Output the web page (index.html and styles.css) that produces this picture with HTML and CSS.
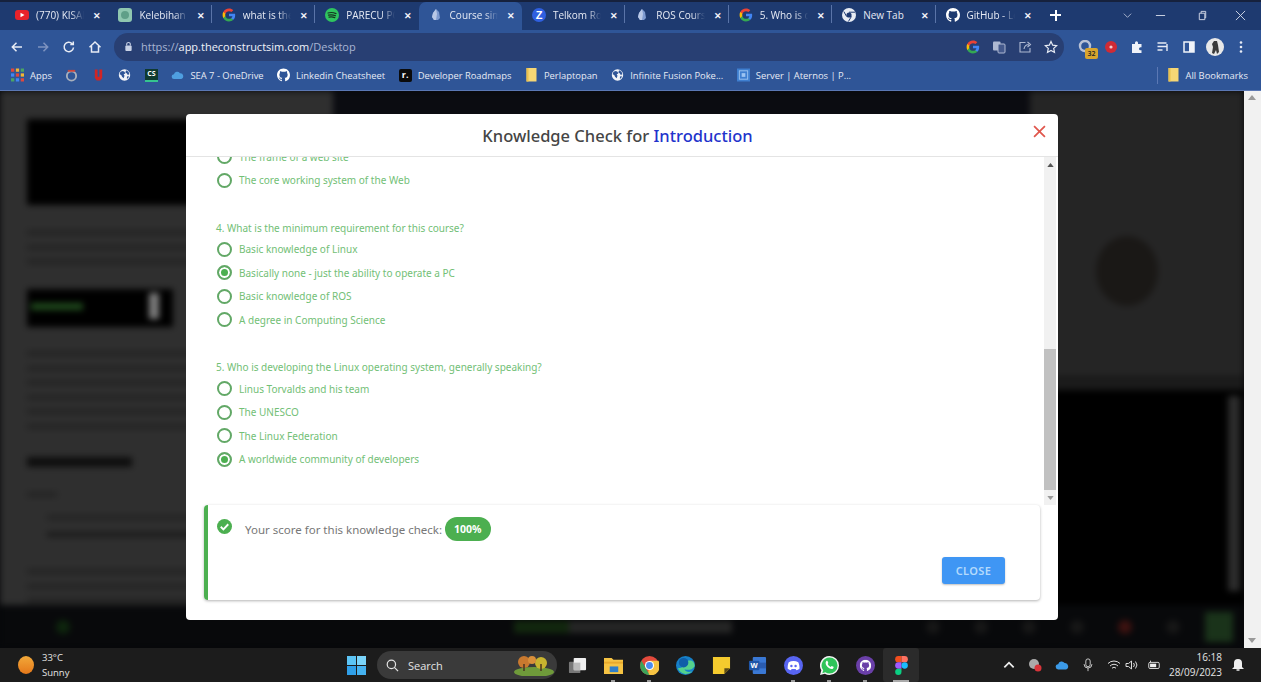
FILE: index.html
```html
<!DOCTYPE html>
<html lang="en">
<head>
    <meta charset="UTF-8">
    <meta name="viewport" content="width=device-width, initial-scale=1.0">
    <title>Course simulation - Knowledge Check</title>
    <link rel="stylesheet" href="styles.css">
</head>
<body>
    <svg class="defs" width="0" height="0">
        <symbol id="i-g" viewBox="0 0 24 24">
            <path fill="#4285F4" d="M22.56 12.25c0-.78-.07-1.53-.2-2.25H12v4.26h5.92c-.26 1.37-1.04 2.53-2.21 3.31v2.77h3.57c2.08-1.92 3.28-4.74 3.28-8.09z"/>
            <path fill="#34A853" d="M12 23c2.97 0 5.46-.98 7.28-2.66l-3.57-2.77c-.98.66-2.23 1.06-3.71 1.06-2.86 0-5.29-1.93-6.16-4.53H2.18v2.84C3.99 20.53 7.7 23 12 23z"/>
            <path fill="#FBBC05" d="M5.84 14.09c-.22-.66-.35-1.36-.35-2.09s.13-1.43.35-2.09V7.07H2.18C1.43 8.55 1 10.22 1 12s.43 3.45 1.18 4.93l2.85-2.22.81-.62z"/>
            <path fill="#EA4335" d="M12 5.38c1.62 0 3.06.56 4.21 1.64l3.15-3.15C17.45 2.09 14.97 1 12 1 7.7 1 3.99 3.47 2.18 7.07l3.66 2.84c.87-2.6 3.3-4.53 6.16-4.53z"/>
        </symbol>
        <symbol id="i-gh" viewBox="0 0 16 16">
            <path fill="currentColor" d="M8 0C3.58 0 0 3.58 0 8c0 3.54 2.29 6.53 5.47 7.59.4.07.55-.17.55-.38 0-.19-.01-.82-.01-1.49-2.01.37-2.53-.49-2.69-.94-.09-.23-.48-.94-.82-1.13-.28-.15-.68-.52-.01-.53.63-.01 1.08.58 1.23.82.72 1.21 1.87.87 2.33.66.07-.52.28-.87.51-1.07-1.78-.2-3.64-.89-3.64-3.95 0-.87.31-1.59.82-2.15-.08-.2-.36-1.02.08-2.12 0 0 .67-.21 2.2.82.64-.18 1.32-.27 2-.27s1.36.09 2 .27c1.53-1.04 2.2-.82 2.2-.82.44 1.1.16 1.92.08 2.12.51.56.82 1.27.82 2.15 0 3.07-1.87 3.75-3.65 3.95.29.25.54.73.54 1.48 0 1.07-.01 1.93-.01 2.2 0 .21.15.46.55.38A8.013 8.013 0 0016 8c0-4.42-3.58-8-8-8z"/>
        </symbol>
        <symbol id="i-globe" viewBox="0 0 16 16">
            <circle cx="8" cy="8" r="7" fill="#f2f4f8"/>
            <path fill="#2f5597" d="M3 4l3-1 2 1 1 2-2 1 1 2-1 3-2-2-1-2-2-1zM10 2l3 2 1 3-2 1-1-2-2-1zM11 10l2-1 0 2-2 2z"/>
        </symbol>
        <symbol id="i-folder" viewBox="0 0 12 14">
            <path fill="#f6d775" d="M1 0h10v13.5H1z"/>
            <path fill="#e9c04e" d="M1 0h2v13.5H1z"/>
        </symbol>
        <symbol id="i-course" viewBox="0 0 14 14">
            <path fill="#7f9bd0" d="M7 1l3 3 1 6-2 2H5L3 9l1-4z"/>
            <path fill="#b9c8e6" d="M7 1l1 5-1 6H5L3 9l1-4z"/>
        </symbol>
    </svg>

    <header class="browser">
        <div class="tabstrip">
            <div class="tab">
                <svg class="tab-icon" viewBox="0 0 14 14"><rect y="2" width="14" height="10" rx="3" fill="#e8222a"/><path fill="#fff" d="M5.5 4.8L9.5 7l-4 2.2z"/></svg>
                <span class="tab-title">(770) KISAH</span><span class="tab-close">✕</span>
            </div>
            <div class="tab">
                <svg class="tab-icon" viewBox="0 0 14 14"><rect width="14" height="14" rx="3" fill="#8fc7b0"/><circle cx="7" cy="7" r="4" fill="#5f9f88"/></svg>
                <span class="tab-title">Kelebihan d</span><span class="tab-close">✕</span>
            </div>
            <div class="tab sep">
                <svg class="tab-icon"><use href="#i-g"/></svg>
                <span class="tab-title">what is the</span><span class="tab-close">✕</span>
            </div>
            <div class="tab sep">
                <svg class="tab-icon" viewBox="0 0 14 14"><circle cx="7" cy="7" r="7" fill="#2fc55f"/><path d="M3 5q4-1.200 8 .6M3.500 7.200q3.500-.9 7 .5M4 9.200q3-.7 5.800.4" fill="none" stroke="#16331f" stroke-width="1.200" stroke-linecap="round"/></svg>
                <span class="tab-title">PARECU PO</span><span class="tab-close">✕</span>
            </div>
            <div class="tab active">
                <svg class="tab-icon"><use href="#i-course"/></svg>
                <span class="tab-title">Course sim</span><span class="tab-close">✕</span>
            </div>
            <div class="tab">
                <svg class="tab-icon" viewBox="0 0 14 14"><circle cx="7" cy="7" r="7" fill="#2f5fe0"/><text x="7" y="10.800" text-anchor="middle" class="tab-z">Z</text></svg>
                <span class="tab-title">Telkom Rob</span><span class="tab-close">✕</span>
            </div>
            <div class="tab sep">
                <svg class="tab-icon"><use href="#i-course"/></svg>
                <span class="tab-title">ROS Course</span><span class="tab-close">✕</span>
            </div>
            <div class="tab sep">
                <svg class="tab-icon"><use href="#i-g"/></svg>
                <span class="tab-title">5. Who is d</span><span class="tab-close">✕</span>
            </div>
            <div class="tab sep">
                <svg class="tab-icon" viewBox="0 0 14 14"><circle cx="7" cy="7" r="7" fill="#e8ecf4"/><circle cx="7" cy="7" r="2.600" fill="#1f3a72"/><path d="M7 4.200h6M4.600 8.500L1.800 3.500M9.400 8.500L6.400 13.500" stroke="#1f3a72" stroke-width="1"/></svg>
                <span class="tab-title solid">New Tab</span><span class="tab-close">✕</span>
            </div>
            <div class="tab sep">
                <svg class="tab-icon"><use href="#i-gh"/></svg>
                <span class="tab-title">GitHub - Le</span><span class="tab-close">✕</span>
            </div>
            <div class="tab-new"><span></span></div>
            <div class="win-controls">
                <svg viewBox="0 0 12 12" class="win-btn chevron"><path d="M2 4l4 4 4-4" fill="none" stroke="#aeb9d2" stroke-width="1"/></svg>
                <svg viewBox="0 0 12 12" class="win-btn minimize"><path d="M1 6h10" stroke="#d7dcea" stroke-width="1"/></svg>
                <svg viewBox="0 0 12 12" class="win-btn restore"><path d="M2.500 3.500h6v7h-6zM4.500 3.500v-2h5v7h-1" fill="none" stroke="#d7dcea" stroke-width="1"/></svg>
                <svg viewBox="0 0 12 12" class="win-btn closer"><path d="M1 1l10 10M11 1L1 11" stroke="#d7dcea" stroke-width="1"/></svg>
            </div>
        </div>

        <div class="toolbar">
            <span class="tool"><svg viewBox="0 0 14 14"><path d="M12 7H2.500M6.500 2.800L2.300 7l4.200 4.200" fill="none" stroke="#e8ecf5" stroke-width="1.500"/></svg></span>
            <span class="tool"><svg viewBox="0 0 14 14"><path d="M2 7h9.500M7.500 2.800L11.700 7l-4.200 4.200" fill="none" stroke="#7e93c0" stroke-width="1.500"/></svg></span>
            <span class="tool"><svg viewBox="0 0 14 14"><path d="M11.500 7.500a4.700 4.700 0 1 1-1.300-3.800M11.300 1.500v3h-3" fill="none" stroke="#e8ecf5" stroke-width="1.500"/></svg></span>
            <span class="tool"><svg viewBox="0 0 14 14"><path d="M1.500 7.200L7 2l5.500 5.200M3.500 6v6h7V6" fill="none" stroke="#e8ecf5" stroke-width="1.500"/></svg></span>
            <div class="address">
                <svg class="lock" viewBox="0 0 10 12"><path d="M3 5V3.500a2 2 0 0 1 4 0V5" fill="none" stroke="#c9d2e6" stroke-width="1.200"/><rect x="1.500" y="5" width="7" height="6" rx="1" fill="#c9d2e6"/></svg>
                <span class="url"><span class="url-dim">https://</span>app.theconstructsim.com<span class="url-dim">/Desktop</span></span>
                <span class="tool addr-tool"><svg><use href="#i-g"/></svg></span>
                <span class="tool addr-tool"><svg viewBox="0 0 14 14"><rect x="1" y="1.500" width="7.500" height="9" rx="1" fill="#aeb9d2"/><rect x="6" y="4" width="7" height="9" rx="1" fill="#44598c" stroke="#aeb9d2"/></svg></span>
                <span class="tool addr-tool"><svg viewBox="0 0 14 14"><path d="M7.500 2.500H2v9.500h10V8M6 9c.5-3 2.500-4.500 5-4.500M9.500 2L12.500 4.500 9.500 7" fill="none" stroke="#aeb9d2" stroke-width="1.100"/></svg></span>
                <span class="tool addr-tool"><svg viewBox="0 0 14 14"><path d="M7 1.500l1.700 3.700 4 .5-3 2.700.8 4L7 10.400l-3.500 2 .8-4-3-2.700 4-.5z" fill="none" stroke="#e8ecf5" stroke-width="1.200"/></svg></span>
            </div>
            <div class="ext-tools">
                <span class="tool badge-wrap"><svg viewBox="0 0 14 14"><circle cx="7" cy="6" r="5" fill="none" stroke="#b9c2d6" stroke-width="2.400"/></svg><span class="count">32</span></span>
                <span class="tool"><svg viewBox="0 0 14 14"><circle cx="7" cy="7" r="6" fill="#cf2b35"/><circle cx="7" cy="7" r="1.600" fill="#f6c8cb"/></svg></span>
                <span class="tool"><svg viewBox="0 0 14 14"><path fill="#f0f3f9" d="M2 4h3V2.800a1.500 1.500 0 0 1 3 0V4h3.500v3.200h-1a1.500 1.500 0 0 0 0 3h1V13H2z"/></svg></span>
                <span class="tool"><svg viewBox="0 0 14 14"><path d="M1.500 3h9M1.500 6.500h9M1.500 10h5M11 4v7" fill="none" stroke="#e8ecf5" stroke-width="1.400"/></svg></span>
                <span class="tool"><svg viewBox="0 0 14 14"><rect x="2" y="2" width="10" height="10" fill="none" stroke="#f0f3f9" stroke-width="1.500"/><rect x="7" y="2" width="5" height="10" fill="#f0f3f9"/></svg></span>
                <span class="tool"><svg class="avatar" viewBox="0 0 18 18"><circle cx="9" cy="9" r="9" fill="#e8e8e8"/><path fill="#3a3a3a" d="M8 3h3l1 4 1 7-2 2-1-4-2 4-2-1 1-6-1-3z"/></svg></span>
                <span class="tool"><svg viewBox="0 0 14 14"><circle cx="7" cy="2.500" r="1.300" fill="#e8ecf5"/><circle cx="7" cy="7" r="1.300" fill="#e8ecf5"/><circle cx="7" cy="11.500" r="1.300" fill="#e8ecf5"/></svg></span>
            </div>
        </div>

        <nav class="bookmarks">
            <a class="mark"><svg class="apps" viewBox="0 0 12 12"><path fill="#e0483c" d="M0 0h3v3H0z"/><path fill="#f2b632" d="M4.500 0h3v3h-3z"/><path fill="#4aa564" d="M9 0h3v3H9z"/><path fill="#4285f4" d="M0 4.500h3v3H0z"/><path fill="#e0483c" d="M4.500 4.500h3v3h-3z"/><path fill="#f2b632" d="M9 4.500h3v3H9z"/><path fill="#4aa564" d="M0 9h3v3H0z"/><path fill="#4285f4" d="M4.500 9h3v3h-3z"/><path fill="#e0483c" d="M9 9h3v3H9z"/></svg>Apps</a>
            <a class="mark"><svg viewBox="0 0 14 14"><circle cx="7" cy="8" r="5" fill="none" stroke="#a8b0bd" stroke-width="2"/><path d="M3 2.500h8" stroke="#c9443c" stroke-width="2"/></svg></a>
            <a class="mark"><svg viewBox="0 0 14 14"><path d="M3 1h3v8h2V1h3v9l-2 3H5l-2-3z" fill="#d02525"/></svg></a>
            <a class="mark"><svg><use href="#i-globe"/></svg></a>
            <a class="mark"><span class="cs">CS</span></a>
            <a class="mark"><svg viewBox="0 0 16 12" class="cloud"><path fill="#4f9fe0" d="M4 11a3 3 0 0 1-.4-6A4.200 4.200 0 0 1 11 3.800 3.700 3.700 0 0 1 12.500 11z"/></svg>SEA 7 - OneDrive</a>
            <a class="mark"><svg class="gh"><use href="#i-gh"/></svg>Linkedin Cheatsheet</a>
            <a class="mark"><span class="rm">r.</span>Developer Roadmaps</a>
            <a class="mark"><svg><use href="#i-folder"/></svg>Perlaptopan</a>
            <a class="mark"><svg><use href="#i-globe"/></svg>Infinite Fusion Poke...</a>
            <a class="mark"><svg viewBox="0 0 14 14"><rect width="14" height="14" fill="#3f7fd0"/><rect x="2.500" y="2.500" width="9" height="9" fill="none" stroke="#9cc4f2"/><rect x="5" y="5" width="4" height="4" fill="#9cc4f2"/></svg>Server | Aternos | P...</a>
            <a class="mark all"><svg><use href="#i-folder"/></svg>All Bookmarks</a>
        </nav>
    </header>

    <main class="stage">
        <div class="page">
            <div class="page-blur">
                <div class="page-main">
                    <section class="lesson">
                        <div class="video"></div>
                        <div class="para">
                            <i></i><i></i><i class="short"></i>
                        </div>
                        <div class="code"><b></b><u></u></div>
                        <div class="para wide">
                            <i></i><i></i><i></i><i></i><i></i><i></i>
                        </div>
                        <div class="lesson-head"></div>
                        <div class="para list">
                            <i class="tiny"></i><i class="indent"></i><i class="indent dark"></i>
                        </div>
                        <div class="para last">
                            <i></i><i></i><i></i>
                        </div>
                    </section>
                    <div class="middle"></div>
                    <aside class="side">
                        <div class="side-top"><div class="robot"></div></div>
                        <div class="side-strip"></div>
                        <div class="side-bottom"><div class="side-scroll"></div></div>
                    </aside>
                </div>
                <div class="page-bar">
                    <span class="dot green"></span>
                    <span class="bar-progress"></span>
                    <span class="dot"></span><span class="dot"></span><span class="dot"></span><span class="dot"></span>
                    <span class="dot red"></span><span class="dot"></span>
                    <span class="run"></span>
                </div>
            </div>
        </div>
        <div class="page-scroll">
            <svg viewBox="0 0 8 5"><path d="M4 0l4 5H0z"/></svg>
            <svg viewBox="0 0 8 5"><path d="M0 0h8L4 5z"/></svg>
        </div>

        <div class="modal">
            <div class="modal-head">
                <h2>Knowledge Check for <span>Introduction</span></h2>
                <svg class="modal-x" viewBox="0 0 12 12"><path d="M1 1l10 10M11 1L1 11" stroke="#e0564c" stroke-width="1.600"/></svg>
            </div>
            <div class="modal-body">
                <div class="quiz">
                    <label class="opt first"><span class="radio"></span>The frame of a web site</label>
                    <label class="opt"><span class="radio"></span>The core working system of the Web</label>

                    <p class="question">4. What is the minimum requirement for this course?</p>
                    <label class="opt"><span class="radio"></span>Basic knowledge of Linux</label>
                    <label class="opt"><span class="radio on"></span>Basically none - just the ability to operate a PC</label>
                    <label class="opt"><span class="radio"></span>Basic knowledge of ROS</label>
                    <label class="opt"><span class="radio"></span>A degree in Computing Science</label>

                    <p class="question">5. Who is developing the Linux operating system, generally speaking?</p>
                    <label class="opt"><span class="radio"></span>Linus Torvalds and his team</label>
                    <label class="opt"><span class="radio"></span>The UNESCO</label>
                    <label class="opt"><span class="radio"></span>The Linux Federation</label>
                    <label class="opt"><span class="radio on"></span>A worldwide community of developers</label>
                </div>
                <div class="quiz-scroll">
                    <svg viewBox="0 0 8 5"><path d="M4 0l4 5H0z"/></svg>
                    <div class="quiz-thumb"></div>
                    <svg viewBox="0 0 8 5"><path d="M0 0h8L4 5z"/></svg>
                </div>
            </div>
            <div class="result">
                <div class="score">
                    <svg class="check" viewBox="0 0 16 16"><circle cx="8" cy="8" r="8" fill="#4caf50"/><path d="M4 8.300l2.800 2.700L12 5.600" fill="none" stroke="#fff" stroke-width="2"/></svg>
                    <span class="score-text">Your score for this knowledge check:</span>
                    <span class="pill">100%</span>
                </div>
                <div class="actions"><button class="close-btn">CLOSE</button></div>
            </div>
        </div>
    </main>

    <footer class="taskbar">
        <div class="weather">
            <span class="sun"></span>
            <div class="weather-text"><span>33°C</span><span>Sunny</span></div>
        </div>
        <span class="task"><svg viewBox="0 0 20 20"><path fill="#5cc4f5" d="M0 0h9.500v9.500H0z"/><path fill="#7ad4fa" d="M10.500 0H20v9.500h-9.500z"/><path fill="#2f9fe8" d="M0 10.500h9.500V20H0z"/><path fill="#45b2f0" d="M10.500 10.500H20V20h-9.500z"/></svg></span>
        <div class="search">
            <svg viewBox="0 0 14 14"><circle cx="5.800" cy="5.800" r="4.500" fill="none" stroke="#e4e4e4" stroke-width="1.300"/><path d="M9 9l4 4" stroke="#e4e4e4" stroke-width="1.300"/></svg>
            <span>Search</span>
            <svg class="search-art" viewBox="0 0 44 22"><ellipse cx="24" cy="18" rx="20" ry="5" fill="#6f9a3a"/><circle cx="14" cy="8" r="6" fill="#c9792f"/><circle cx="31" cy="9" r="6" fill="#c8b42f"/><circle cx="22" cy="6" r="4" fill="#d98f3a"/><path d="M14 10v7M31 10v7" stroke="#4a3520" stroke-width="1.500"/></svg>
        </div>
        <span class="task"><svg viewBox="0 0 20 20"><rect x="1" y="6" width="12" height="12" rx="1" fill="#777"/><rect x="6" y="2" width="13" height="13" rx="1" fill="#f0f0f0"/><rect x="6" y="7" width="7" height="8" fill="#bbb"/></svg></span>
        <span class="task running"><svg viewBox="0 0 20 20"><path fill="#f6c343" d="M0 2h8l2 2h10v15H0z"/><path fill="#e8a92c" d="M0 6h20v2H0z"/><rect x="6" y="11" width="9" height="6" fill="#2f7fc9"/></svg></span>
        <span class="task running"><svg viewBox="0 0 20 20"><circle cx="10" cy="10" r="10" fill="#e34a3c"/><path fill="#f6c343" d="M10 5h9.500a10 10 0 0 1-11 15z"/><path fill="#3ba45a" d="M10 20A10 10 0 0 1 1.500 5l5 8.500z"/><circle cx="10" cy="10" r="4.800" fill="#fff"/><circle cx="10" cy="10" r="3.600" fill="#4a8bf0"/></svg></span>
        <span class="task"><svg viewBox="0 0 20 20"><circle cx="10" cy="10" r="10" fill="#1680c8"/><path fill="#54d18c" d="M2 13a9 9 0 0 0 15 3c-3 1.500-7 1-8-2 3 1 8 1 10.500-3 .4-2-.5-4-1.500-5-1.500-1.500-6-2-8 1-1.500 2-1 5-8 6z"/><circle cx="8" cy="7" r="5" fill="#0f5ea8"/></svg></span>
        <span class="task"><svg viewBox="0 0 20 20"><path fill="#f5cb2e" d="M1 1h18v12l-6 6H1z"/><path fill="#5a4a18" d="M13 13h6l-6 6z"/></svg></span>
        <span class="task"><svg viewBox="0 0 20 20"><rect x="5" y="1" width="14" height="18" rx="1" fill="#3a78d4"/><rect x="5" y="7" width="14" height="6" fill="#2a5cb0"/><rect x="1" y="5" width="11" height="10" rx="1" fill="#1f56a8"/><text x="6.500" y="13" text-anchor="middle" class="word-w">W</text></svg></span>
        <span class="task running"><svg viewBox="0 0 20 20"><circle cx="10" cy="10" r="10" fill="#5865f2"/><path fill="#fff" d="M5 6.500c3-1.500 7-1.500 10 0 1 2 1.500 4.500 1.300 7-1.200.9-2.300 1.300-3.300 1.500l-.8-1.300H8l-.8 1.300c-1-.2-2.100-.6-3.300-1.500-.2-2.500.2-5 1.100-7z"/><circle cx="7.800" cy="10.500" r="1.300" fill="#5865f2"/><circle cx="12.200" cy="10.500" r="1.300" fill="#5865f2"/></svg></span>
        <span class="task running"><svg viewBox="0 0 20 20"><path fill="#f4f4f4" d="M10 0a10 10 0 0 1 0 20c-1.800 0-3.400-.5-4.900-1.300L0 20l1.400-4.900A10 10 0 0 1 10 0z"/><path fill="#2fc45a" d="M10 1.500a8.500 8.500 0 0 1 0 17c-1.600 0-3.100-.5-4.400-1.300l-3.200 1 1-3.100A8.500 8.500 0 0 1 10 1.500z"/><path fill="#fff" d="M6.500 5.500c.6-.6 1.300-.5 1.500 0l.8 1.800-.8 1.200c.7 1.300 1.700 2.300 3.100 3l1.200-1 1.900.9c.3.700 0 1.500-.7 2-1.300.8-3.600 0-5.500-1.800-2-2-2.700-4.500-1.500-6.100z"/></svg></span>
        <span class="task running"><svg viewBox="0 0 20 20"><circle cx="10" cy="10" r="10" fill="#6a3fa8"/><use href="#i-gh" x="4" y="4" width="12" height="12" class="gh-light"/></svg></span>
        <span class="task figma running"><svg viewBox="0 0 12 18"><path fill="#f24e1e" d="M0 3a3 3 0 0 1 3-3h3v6H3a3 3 0 0 1-3-3z"/><path fill="#ff7262" d="M6 0h3a3 3 0 0 1 0 6H6z"/><path fill="#a259ff" d="M0 9a3 3 0 0 1 3-3h3v6H3a3 3 0 0 1-3-3z"/><circle cx="9" cy="9" r="3" fill="#1abcfe"/><path fill="#0acf83" d="M0 15a3 3 0 0 1 3-3h3v3a3 3 0 0 1-6 0z"/></svg></span>

        <div class="tray">
            <span class="tray-i"><svg viewBox="0 0 12 12"><path d="M2 8l4-4 4 4" fill="none" stroke="#eee" stroke-width="1.500"/></svg></span>
            <span class="tray-i"><svg viewBox="0 0 14 14"><circle cx="6" cy="6" r="5" fill="#aaa"/><circle cx="10" cy="10" r="3.500" fill="#d8343a"/></svg></span>
            <span class="tray-i"><svg viewBox="0 0 16 12"><path fill="#3b9ae8" d="M4 11a3 3 0 0 1-.4-6A4.200 4.200 0 0 1 11 3.800 3.700 3.700 0 0 1 12.500 11z"/></svg></span>
            <span class="tray-i"><svg viewBox="0 0 12 16"><rect x="3.500" y="1" width="5" height="9" rx="2.500" fill="none" stroke="#ddd"/><path d="M1.500 7a4.500 4.500 0 0 0 9 0M6 11.500V15" fill="none" stroke="#ddd"/></svg></span>
            <span class="tray-i narrow wifi"><svg viewBox="0 0 14 12"><path d="M1 4.500a8.500 8.500 0 0 1 12 0M3 7a5.500 5.500 0 0 1 8 0M5 9.200a2.800 2.800 0 0 1 4 0" fill="none" stroke="#ddd"/></svg></span>
            <span class="tray-i narrow"><svg viewBox="0 0 14 12"><path d="M1 4.500h2.500L6.500 2v8L3.500 7.500H1zM8.500 4a3 3 0 0 1 0 4M10.500 2.500a5.500 5.500 0 0 1 0 7" fill="none" stroke="#ddd"/></svg></span>
            <span class="tray-i"><svg viewBox="0 0 16 12"><rect x="2" y="3" width="12" height="7" rx="1.500" fill="none" stroke="#eee"/><rect x="3.500" y="4.500" width="7" height="4" fill="#eee"/><path d="M4 1v2" stroke="#eee"/></svg></span>
            <div class="clock"><span>16:18</span><span>28/09/2023</span></div>
            <span class="tray-i bell"><svg viewBox="0 0 14 14"><path d="M7 1a4 4 0 0 1 4 4v4l2 2H1l2-2V5a4 4 0 0 1 4-4z" fill="#eee"/><path d="M5.500 12h3" stroke="#eee" stroke-width="1.500"/></svg></span>
        </div>
    </footer>
</body>
</html>
```

FILE: styles.css
```css
/* === BASE === */
* {
    box-sizing: border-box;
}

body {
    margin: 0;
    width: 1261px;
    height: 682px;
    overflow: hidden;
    display: flex;
    flex-direction: column;
    font-family: 'Noto Sans', sans-serif;
    background: #000;
}

.defs {
    position: absolute;
}

/* === BROWSER CHROME === */
.browser {
    height: 91px;
    flex-shrink: 0;
    background: #2f5597;
    color: #e6eaf4;
    font-family: 'Open Sans', sans-serif;
}

.tabstrip {
    height: 30px;
    padding-left: 5px;
    display: flex;
    background: #1e3a70;
    border-top: 2px solid #16213d;
}

.tab {
    width: 103.4px;
    height: 28px;
    padding: 0 7px 2px 10px;
    display: flex;
    align-items: center;
    gap: 7px;
    font-size: 10px;
    position: relative;
}

.tab.sep::before {
    content: "";
    position: absolute;
    left: -1px;
    top: 3px;
    height: 18px;
    border-left: 1px solid #5a74a8;
}

.tab.active {
    background: #2f5597;
    border-radius: 7px 7px 0 0;
}

.tab-icon {
    width: 14px;
    height: 14px;
    flex-shrink: 0;
    color: #fff;
}

.tab-z {
    font: bold 11px 'Liberation Sans', sans-serif;
    fill: #fff;
}

.tab-title {
    flex: 1;
    min-width: 0;
    white-space: nowrap;
    -webkit-mask-image: linear-gradient(to right, #000 70%, transparent 96%);
    mask-image: linear-gradient(to right, #000 70%, transparent 96%);
}

.tab-title.solid {
    -webkit-mask-image: none;
    mask-image: none;
}

.tab-close {
    font-size: 9px;
    font-weight: 700;
    color: #f2f4fa;
}

.tab-new {
    width: 40px;
    display: flex;
    align-items: center;
    justify-content: center;
    margin-left: -3px;
    height: 26px;
}

.tab-new span {
    width: 11px;
    height: 11px;
    background:
        linear-gradient(#fff, #fff) center / 11px 2px no-repeat,
        linear-gradient(#fff, #fff) center / 2px 11px no-repeat;
}

.win-controls {
    margin-left: auto;
    display: flex;
    align-items: center;
    height: 26px;
}

.win-btn {
    width: 11px;
    height: 11px;
}

.chevron { margin-right: 22px; }
.minimize { margin-right: 31px; }
.restore { margin-right: 27px; }
.closer { margin-right: 15px; }

.toolbar {
    height: 33px;
    padding: 0 7px 0 4px;
    display: flex;
    align-items: center;
}

.tool {
    width: 26px;
    height: 26px;
    flex-shrink: 0;
    display: flex;
    align-items: center;
    justify-content: center;
    position: relative;
}

.tool svg {
    width: 14px;
    height: 14px;
}

.address {
    flex: 1;
    height: 28px;
    margin-left: 6px;
    padding-left: 10px;
    display: flex;
    align-items: center;
    background: #283f73;
    border-radius: 14px;
}

.lock {
    width: 9px;
    height: 11px;
    margin-right: 8px;
}

.url {
    flex: 1;
    font-size: 11px;
    color: #f0f3fa;
}

.url-dim {
    color: #a9b6d3;
}

.ext-tools {
    margin-left: 8px;
    display: flex;
}

.count {
    position: absolute;
    left: 13px;
    top: 14px;
    width: 13px;
    height: 11px;
    background: #d9a52e;
    color: #222;
    font-size: 7px;
    line-height: 11px;
    text-align: center;
    border-radius: 2px;
    font-weight: 600;
}

.tool svg.avatar {
    width: 18px;
    height: 18px;
}

.bookmarks {
    height: 28px;
    padding: 0 13px 3px 11px;
    display: flex;
    align-items: center;
    gap: 13.5px;
    font-size: 9.4px;
    border-bottom: 1px solid #5b78b4;
}

.mark {
    display: flex;
    align-items: center;
    gap: 6px;
    white-space: nowrap;
}

.mark svg {
    width: 13px;
    height: 14px;
    flex-shrink: 0;
}

.mark .gh {
    color: #fff;
}

.cs {
    width: 13px;
    height: 13px;
    background: #0f3a30;
    border-bottom: 2px solid #35c48f;
    color: #fff;
    font-size: 7px;
    font-weight: 700;
    line-height: 10px;
    text-align: center;
}

.rm {
    width: 13px;
    height: 13px;
    background: #0b0b0b;
    color: #fff;
    border-radius: 2px;
    font-size: 9px;
    font-weight: 700;
    line-height: 12px;
    text-align: center;
}

.all {
    margin-left: auto;
    position: relative;
}

.all::before {
    content: "";
    position: absolute;
    left: -10px;
    top: -1px;
    height: 17px;
    border-left: 1px solid #5b78b4;
}

/* === BLURRED PAGE BEHIND THE DIALOG === */
.stage {
    flex: 1;
    display: flex;
    position: relative;
    min-height: 0;
}

.page {
    flex: 1;
    overflow: hidden;
    background: #07080b;
}

.page-blur {
    height: 100%;
    display: flex;
    flex-direction: column;
    filter: blur(3px);
}

.page-main {
    flex: 1;
    min-height: 0;
    display: flex;
}

.lesson {
    width: 333px;
    padding: 28px 0 0 27px;
    background: #2f2f2f;
    overflow: hidden;
}

.video {
    height: 86px;
    background: #000;
}

.para {
    margin-top: 25px;
    display: flex;
    flex-direction: column;
    gap: 9.5px;
}

.para i {
    display: block;
    height: 5px;
    background: #232323;
}

.para i.short { width: 85%; }
.para i.tiny { width: 30px; }
.para i.indent { margin-left: 20px; margin-top: 9px; }
.para i.dark { background: #1a1a1a; margin-top: 2.5px; }

.para.wide {
    margin-top: 24px;
}

.para.list {
    margin-top: 25px;
}

.para.last {
    margin-top: 32px;
}

.code {
    width: 146px;
    height: 38px;
    margin-top: 25px;
    padding: 14px 14px 0 4px;
    display: flex;
    justify-content: space-between;
    background: #000;
}

.code b {
    width: 52px;
    height: 7px;
    background: #1f4a1c;
}

.code u {
    width: 10px;
    height: 26px;
    margin-top: -10px;
    background: #7c7c7c;
}

.lesson-head {
    width: 105px;
    height: 10px;
    margin-top: 28px;
    background: #0e0e0e;
}

.middle {
    width: 697px;
    background: #0b0c11;
}

.side {
    flex: 1;
    display: flex;
    flex-direction: column;
}

.side-top {
    height: 284px;
    padding: 145px 0 0 66px;
    background: #252525;
}

.robot {
    width: 62px;
    height: 70px;
    border-radius: 50%;
    background: #1a1816;
}

.side-strip {
    height: 15px;
    background: #1b1b1b;
}

.side-bottom {
    flex: 1;
    padding: 6px 4px 0 0;
    display: flex;
    justify-content: flex-end;
    background: #000;
}

.side-scroll {
    width: 12px;
    height: 195px;
    background: #2c2c2c;
}

.page-bar {
    height: 43px;
    flex-shrink: 0;
    padding-left: 56px;
    display: flex;
    align-items: center;
    background: #08090b;
}

.dot {
    width: 14px;
    height: 14px;
    margin-right: 34px;
    border-radius: 50%;
    background: #171717;
}

.dot.green { background: #0e260d; }
.dot.red { background: #3d1210; }

.bar-progress {
    width: 218px;
    height: 12px;
    margin: 0 194px 0 410px;
    background: linear-gradient(to right, #12280e 25%, #262626 25%);
}

.run {
    width: 28px;
    height: 30px;
    margin-left: -9px;
    background: #1a331a;
}

.page-scroll {
    width: 17px;
    padding: 4px 4px 5px;
    display: flex;
    flex-direction: column;
    justify-content: space-between;
    background: #f1f1f1;
}

.page-scroll svg {
    width: 8px;
    height: 5px;
    fill: #9a9a9a;
}

/* === DIALOG === */
.modal {
    position: absolute;
    left: 186px;
    top: 23px;
    width: 872px;
    height: 506px;
    display: flex;
    flex-direction: column;
    background: #fff;
    border-radius: 4px;
}

.modal-head {
    height: 43px;
    flex-shrink: 0;
    padding-right: 9px;
    display: flex;
    align-items: center;
    justify-content: center;
    border-bottom: 1px solid #e4e4e4;
    position: relative;
}

.modal-head h2 {
    margin: 0;
    font-size: 16.5px;
    font-weight: 500;
    color: #454545;
}

.modal-head h2 span {
    color: #2233cc;
}

.modal-x {
    position: absolute;
    right: 12px;
    top: 11px;
    width: 13px;
    height: 13px;
}

.modal-body {
    height: 348px;
    flex-shrink: 0;
    display: flex;
}

.quiz {
    flex: 1;
    padding-left: 30px;
    overflow: hidden;
    color: #72c076;
    font-size: 10px;
}

.opt {
    height: 23.5px;
    display: flex;
    align-items: center;
    gap: 7px;
}

.opt.first {
    margin-top: -12px;
}

.radio {
    width: 15px;
    height: 15px;
    margin-left: 1px;
    flex-shrink: 0;
    border: 2px solid #62a866;
    border-radius: 50%;
    background: #fff;
}

.radio.on {
    background: #4caf50;
    box-shadow: inset 0 0 0 2px #fff;
}

.question {
    height: 20px;
    margin: 25.5px 0 0;
    line-height: 20px;
}

.quiz-scroll {
    width: 12px;
    margin-right: 2px;
    padding: 6px 2px 5px;
    display: flex;
    flex-direction: column;
    align-items: center;
    background: #f1f1f1;
}

.quiz-scroll svg {
    width: 7px;
    height: 4px;
    flex-shrink: 0;
    fill: #555;
}

.quiz-thumb {
    width: 12px;
    height: 141px;
    margin-top: 182px;
    flex-shrink: 0;
    background: #c1c1c1;
}

.quiz-scroll svg:last-child {
    margin-top: auto;
    fill: #999;
}

.result {
    width: 836px;
    height: 95px;
    margin-left: 18px;
    padding: 12px 35px 16px 9px;
    display: flex;
    flex-direction: column;
    border-left: 4px solid #4caf50;
    border-radius: 4px;
    box-shadow: 0 1px 3px rgba(0, 0, 0, 0.3);
}

.score {
    display: flex;
    align-items: center;
    gap: 13px;
    height: 24px;
}

.check {
    width: 15px;
    height: 15px;
    margin-top: -5px;
}

.score-text {
    font-size: 11.5px;
    color: #777;
}

.pill {
    height: 24px;
    margin-left: -10px;
    padding: 0 9px;
    line-height: 24px;
    font-size: 10.5px;
    font-weight: 700;
    color: #fff;
    background: #4caf50;
    border-radius: 12px;
}

.actions {
    margin-top: auto;
    display: flex;
    justify-content: flex-end;
}

.close-btn {
    width: 63px;
    height: 27px;
    border: 0;
    border-radius: 3px;
    background: #3f96f4;
    color: #b4dafc;
    font: 600 11px 'Noto Sans', sans-serif;
    letter-spacing: 0.4px;
    box-shadow: 0 1px 2px rgba(0, 0, 0, 0.25);
}

/* === TASKBAR === */
.taskbar {
    height: 34px;
    flex-shrink: 0;
    display: flex;
    align-items: center;
    background: #1c1c1c;
    color: #e4e4e4;
    font-family: 'Open Sans', sans-serif;
}

.weather {
    width: 338px;
    padding-left: 18px;
    display: flex;
    align-items: center;
    gap: 8px;
}

.sun {
    width: 16px;
    height: 18px;
    border-radius: 50%;
    background: linear-gradient(#f2a93a, #e5781a);
}

.weather-text {
    display: flex;
    flex-direction: column;
    font-size: 9.5px;
    line-height: 15px;
}

.task {
    width: 36px;
    height: 34px;
    display: flex;
    align-items: center;
    justify-content: center;
    position: relative;
}

.task svg {
    width: 19px;
    height: 19px;
}

.task.running::after {
    content: "";
    position: absolute;
    left: 16px;
    bottom: 0;
    width: 4px;
    height: 2px;
    background: #999;
}

.task.figma {
    background: #2b2b2b;
    border-radius: 3px;
}

.task.figma::after {
    left: 10px;
    width: 16px;
    background: #aaa;
}

.gh-light {
    color: #fff;
}

.word-w {
    font: bold 8px 'Liberation Sans', sans-serif;
    fill: #fff;
}

.search {
    width: 180px;
    height: 28px;
    margin: 0 2px 0 3px;
    padding: 0 3px 0 9px;
    display: flex;
    align-items: center;
    gap: 9px;
    background: #3a3a3a;
    border-radius: 14px;
    font-size: 11px;
}

.search svg {
    width: 13px;
    height: 13px;
}

.search svg.search-art {
    width: 44px;
    height: 22px;
    margin-left: auto;
}

.tray {
    margin-left: auto;
    display: flex;
    align-items: center;
    padding-right: 16px;
}

.tray-i {
    width: 26.5px;
    height: 34px;
    display: flex;
    align-items: center;
    justify-content: center;
}

.tray-i.narrow {
    width: 18px;
}

.tray-i.wifi {
    margin-left: 3px;
}

.tray-i svg {
    width: 14px;
    height: 14px;
}

.clock {
    width: 55px;
    display: flex;
    flex-direction: column;
    align-items: flex-end;
    font-size: 10px;
    line-height: 15px;
}

.tray-i.bell {
    width: 14px;
    margin-left: 9px;
}
```
